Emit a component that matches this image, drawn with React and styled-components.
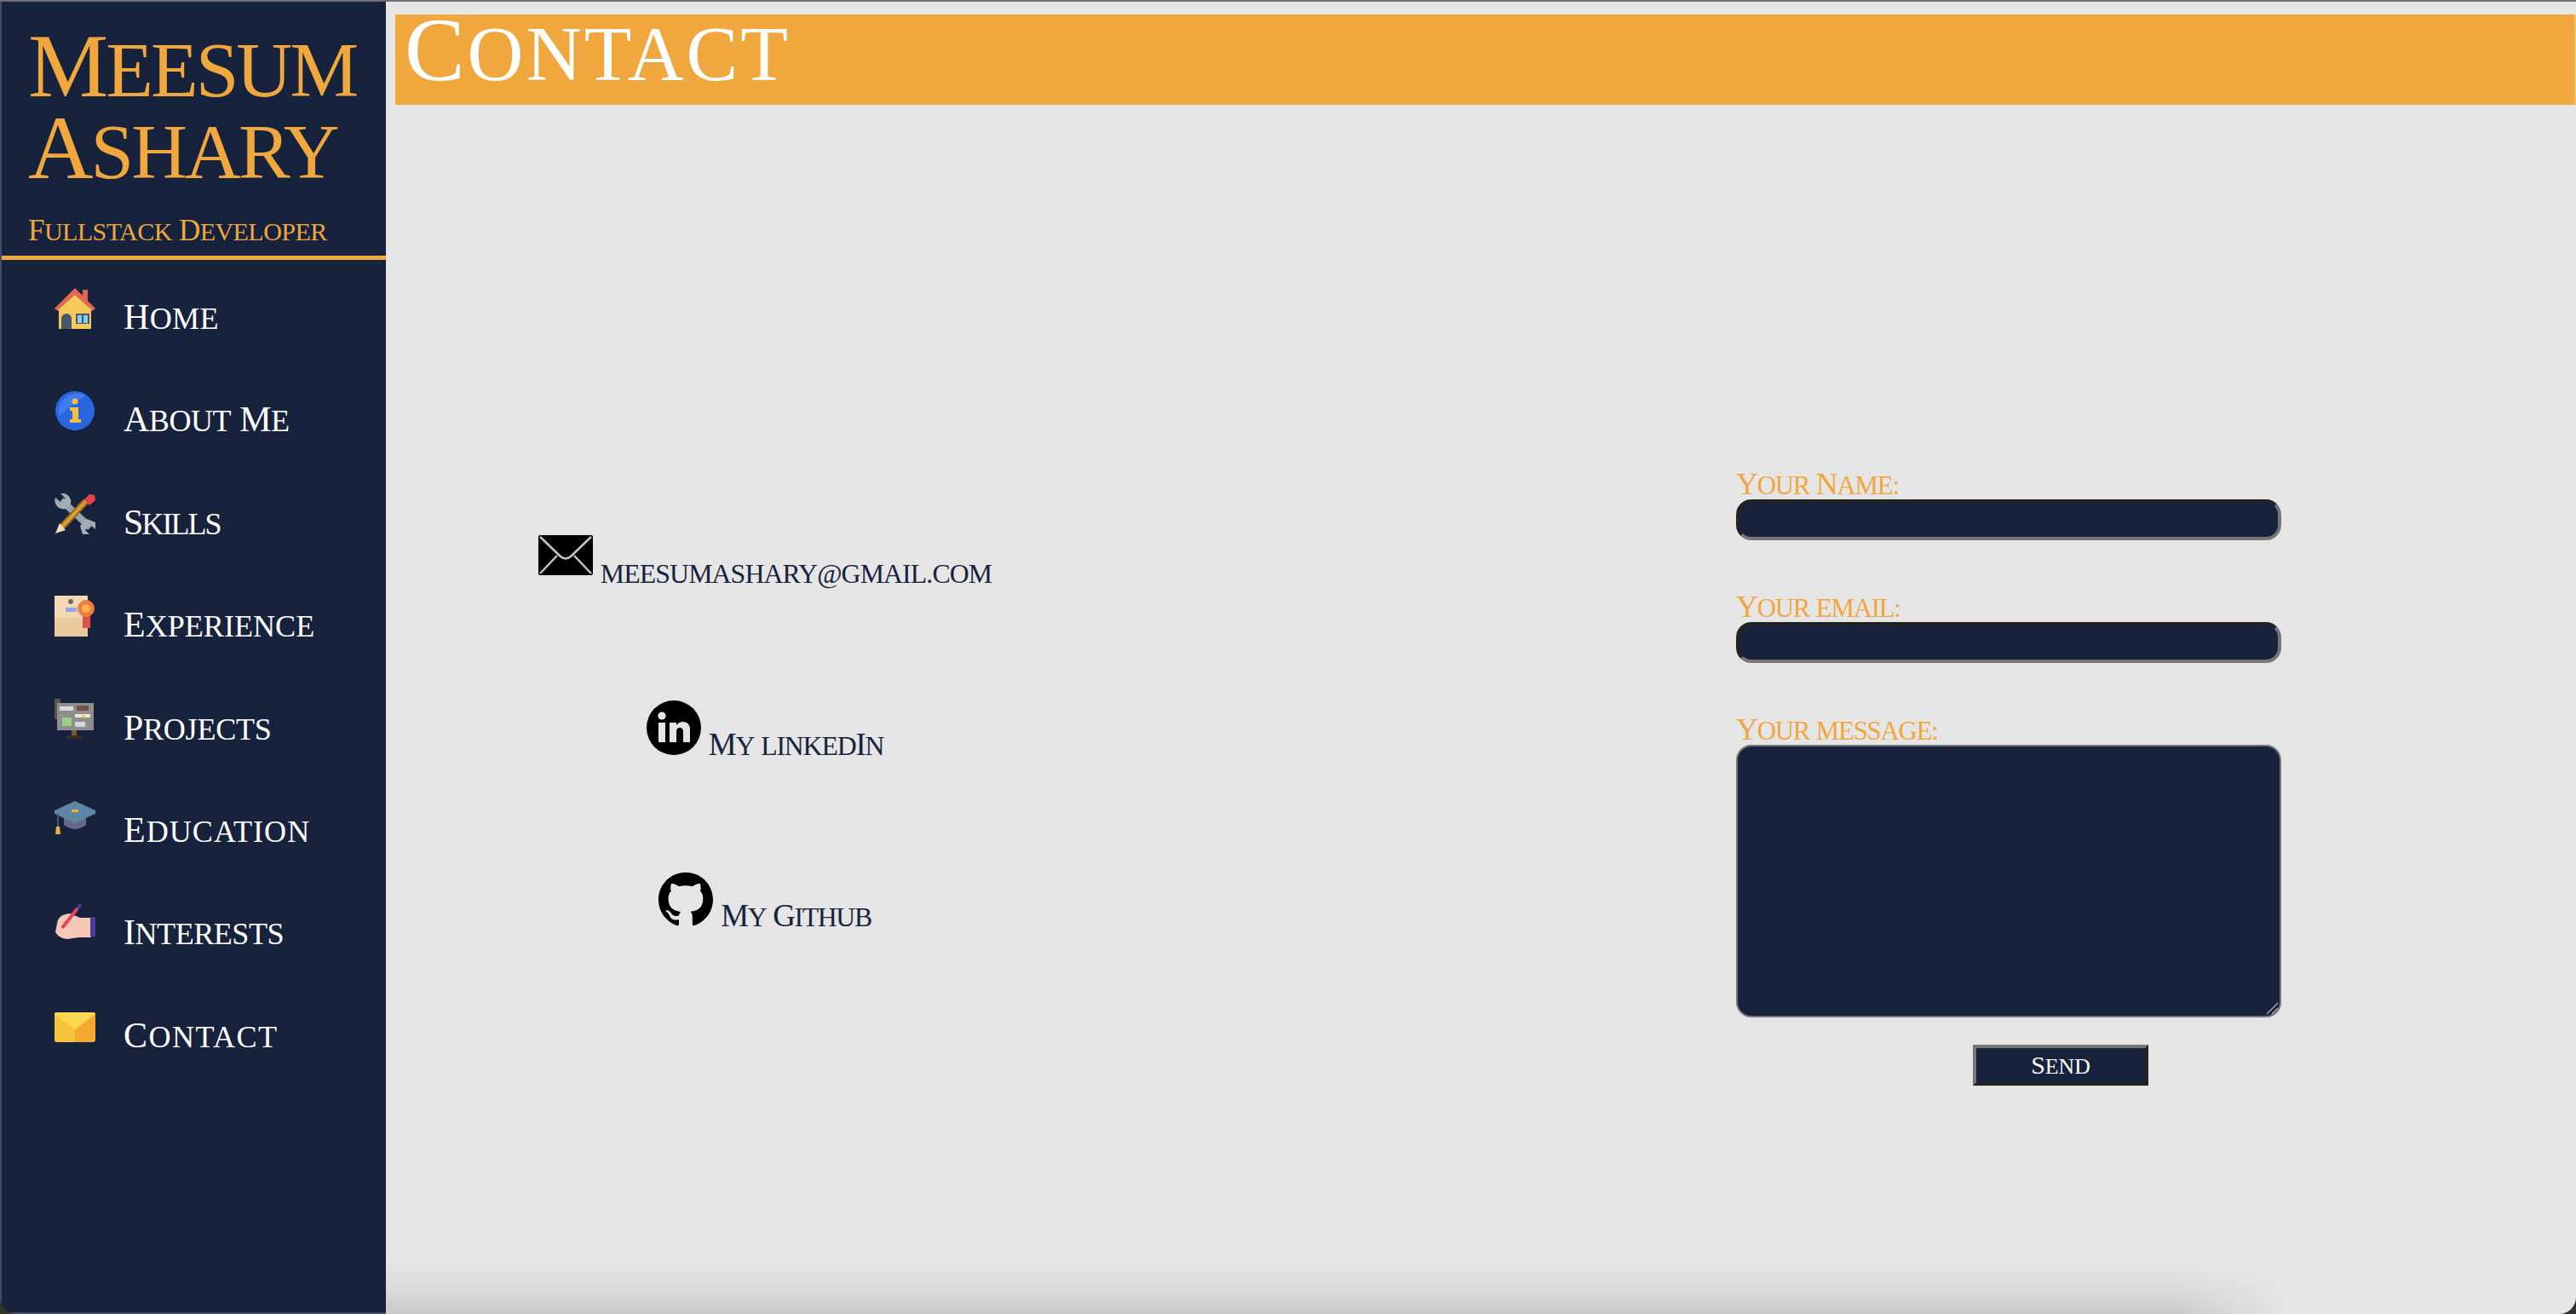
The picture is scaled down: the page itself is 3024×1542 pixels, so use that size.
import React from "react";
import styled, {createGlobalStyle} from "styled-components";
import {SiGithub} from "react-icons/si";

const navy = "#17223d";
const orange = "#f0a73d";
const serif = `"Liberation Serif", "Times New Roman", serif`;

const GlobalStyle = createGlobalStyle`
    html, body {
        margin: 0;
        padding: 0;
        height: 100%;
        overflow: hidden;
    }
    body {
        font-family: ${serif};
        background: #e5e5e5;
    }
`;

const Page = styled.div`
    position: relative;
    display: flex;
    box-sizing: border-box;
    height: 100vh;
    border-top: 2px solid #6f6f6f;
    overflow: hidden;
`;

const Sidebar = styled.aside`
    flex: 0 0 453px;
    box-sizing: border-box;
    background: ${navy};
    border-left: 2px solid #454c66;
    border-bottom: 2px solid #454c66;
`;

const Brand = styled.header`
    box-sizing: border-box;
    padding: 28px 0 9px 31px;
    border-bottom: 5px solid ${orange};
`;

const BrandName = styled.h1`
    margin: 0;
    font-size: 106px;
    line-height: 96px;
    font-weight: 400;
    letter-spacing: -3px;
    color: ${orange};
`;

const BrandLine = styled.span`
    display: block;
`;

const BrandRole = styled.p`
    margin: 29px 0 0;
    font-size: 35px;
    line-height: 40px;
    letter-spacing: -0.6px;
    color: ${orange};
`;

const Nav = styled.nav`
    display: flex;
    flex-direction: column;
    gap: 72.4px;
    padding: 33px 0 0 62px;
`;

const NavItem = styled.a`
    display: flex;
    align-items: baseline;
    gap: 33px;
    height: 48px;
    font-size: 42px;
    letter-spacing: ${(p) => p.$spacing || 0}px;
    color: #fff;
    text-decoration: none;

    svg {
        filter: blur(0.6px);
    }
`;

const Main = styled.main`
    flex: 1;
    min-width: 0;
    padding: 15px 0 0 11px;
`;

const TitleBar = styled.h2`
    box-sizing: border-box;
    height: 106px;
    margin: 0;
    padding-left: 11px;
    background: ${orange};
    border-right: 2px solid #f5bd6e;
    font-size: 106px;
    line-height: 84px;
    font-weight: 400;
    letter-spacing: 2.8px;
    color: #fff;
`;

const Content = styled.section`
    display: grid;
    grid-template-columns: 868px 640px;
    column-gap: 706px;
`;

const Links = styled.div`
    display: flex;
    flex-direction: column;
    align-items: center;
    gap: 137.5px;
    padding-top: 497px;
`;

const LinkRow = styled.a`
    display: flex;
    align-items: baseline;
    gap: 9px;
    height: 64px;
    font-size: 37px;
    letter-spacing: ${(p) => p.$spacing}px;
    color: ${navy};
    text-decoration: none;

    svg {
        filter: blur(0.4px);
    }
`;

const Form = styled.form`
    display: flex;
    flex-direction: column;
    padding-top: 427px;
`;

const Label = styled.label`
    display: block;
    margin-top: ${(p) => (p.$first ? "0" : "60px")};
    font-size: 36px;
    line-height: 36px;
    letter-spacing: -1.3px;
    color: ${orange};
`;

const TextInput = styled.input`
    display: block;
    box-sizing: border-box;
    width: 100%;
    height: 48px;
    background: ${navy};
    border-style: solid;
    border-width: 4px;
    border-color: #222 #767676 #767676 #222;
    border-radius: 18px;
    outline: none;
`;

const MessageBox = styled.div`
    position: relative;
    height: 320px;
`;

const MessageInput = styled.textarea`
    display: block;
    box-sizing: border-box;
    width: 100%;
    height: 100%;
    background: ${navy};
    border: 2px solid #767676;
    border-radius: 18px;
    outline: none;
    resize: none;
`;

const ResizeGrip = styled.svg`
    position: absolute;
    right: 3px;
    bottom: 3px;
    pointer-events: none;
`;

const SendButton = styled.button`
    box-sizing: border-box;
    width: 206px;
    height: 48px;
    margin: 32px 0 0 278px;
    padding: 0;
    background: ${navy};
    border-style: solid;
    border-width: 4px;
    border-color: #767676 #222 #222 #767676;
    font-family: ${serif};
    font-size: 30px;
    line-height: 36px;
    color: #fff;
`;

const DockShadow = styled.div`
    position: absolute;
    left: 453px;
    bottom: 0;
    width: 2230px;
    height: 60px;
    background: linear-gradient(
        to bottom,
        rgba(0, 0, 0, 0),
        rgba(0, 0, 0, 0.03) 40%,
        rgba(0, 0, 0, 0.08) 75%,
        rgba(0, 0, 0, 0.12)
    );
    mask-image: linear-gradient(to right, #000 calc(100% - 135px), transparent);
    pointer-events: none;
`;

// rounded bottom corners of the browser window, desktop showing behind them
const WindowCorners = styled.div`
    position: absolute;
    inset: 0;
    border-radius: 0 0 20px 20px;
    box-shadow: 0 0 0 30px #2e3526;
    pointer-events: none;
`;

const Low = styled.span`
    font-size: 0.86em;
    line-height: 0;
    text-transform: uppercase;
`;

// the reference font has real small caps, this one only has fake ones at 0.7em
const SmallCaps = ({text}) => (
    <span>
        {text.split(/([A-Z ]+)/).map((part, idx) => (idx % 2 ? part : part && <Low key={idx}>{part}</Low>))}
    </span>
);

const HomeIcon = () => (
    <svg width="48" height="48" viewBox="0 0 48 48">
        <rect x="33" y="2" width="6" height="14" fill="#d9694f" />
        <rect x="5" y="20" width="38" height="28" fill="#f7c95c" />
        <path d="M24 0 L48 24 L44 27 L24 8 L4 27 L0 24 Z" fill="#e2694f" />
        <path d="M24 8 L44 26 H4 Z" fill="#f7c95c" />
        <path d="M8 48 V36 a6 6 0 0 1 12 0 V48 Z" fill="#46586a" />
        <rect x="25" y="30" width="16" height="12" fill="#46586a" />
        <rect x="27" y="32" width="5" height="9" fill="#8ccbf0" />
        <rect x="34" y="32" width="5" height="9" fill="#8ccbf0" />
    </svg>
);

const InfoIcon = () => (
    <svg width="48" height="48" viewBox="0 0 48 48">
        <circle cx="24" cy="24" r="23" fill="#2a66e0" />
        <path d="M5 30 A22 22 0 0 1 36 6 Z" fill="#3f7df0" />
        <circle cx="24" cy="13" r="3.5" fill="#f2c23c" />
        <path d="M18 20 H28 V34 H31 V38 H18 V34 H21 V24 H18 Z" fill="#f2c23c" />
    </svg>
);

const ToolsIcon = () => (
    <svg width="48" height="48" viewBox="0 0 48 48">
        <path d="M8 8 L42 40" stroke="#98a2ab" strokeWidth="8" />
        <path d="M1 5 L8 11 L13 6 L7 0 A10 10 0 0 1 19 12 L13 18 A10 10 0 0 1 1 5 Z" fill="#a3adb6" />
        <path d="M48 42 L42 37 L36 43 L41 48 H33 L30 38 L38 30 L48 34 Z" fill="#a3adb6" />
        <path d="M8 40 L37 9" stroke="#8a6a2c" strokeWidth="8" />
        <path d="M8 40 L37 9" stroke="#e89a2c" strokeWidth="4" />
        <path d="M6 35 L13 43 L1 47 Z" fill="#f2dcb8" />
        <path d="M35 7 L41 1 L47 2 L48 8 L41 14 Z" fill="#e8424f" />
    </svg>
);

const CertificateIcon = () => (
    <svg width="48" height="48" viewBox="0 0 48 48">
        <rect x="0" y="0" width="39" height="48" fill="#f3d8b4" />
        <rect x="0" y="26" width="39" height="22" fill="#ecc99c" />
        <circle cx="19" cy="7" r="3" fill="#7a6a64" />
        <rect x="13" y="14" width="13" height="5" fill="#9aa5ee" />
        <rect x="33" y="22" width="9" height="16" fill="#e34f4f" />
        <circle cx="37" cy="15" r="10" fill="#ef7d44" />
        <circle cx="37" cy="15" r="5" fill="#f6b24e" />
    </svg>
);

const ProjectsIcon = () => (
    <svg width="48" height="48" viewBox="0 0 48 48">
        <rect x="0" y="0" width="7" height="24" fill="#5a5346" />
        <rect x="3" y="5" width="43" height="32" fill="#8e8e8e" />
        <rect x="6" y="9" width="16" height="5" fill="#d9d9d9" />
        <rect x="26" y="8" width="14" height="6" fill="#6f5349" />
        <rect x="9" y="22" width="11" height="10" fill="#9ccf83" />
        <rect x="24" y="18" width="18" height="4" fill="#e6e6e6" />
        <rect x="24" y="27" width="12" height="6" fill="#d5d5d5" />
        <circle cx="34" cy="21" r="2" fill="#e8c14a" />
        <rect x="20" y="37" width="6" height="6" fill="#7a5a30" />
        <rect x="14" y="43" width="19" height="4" fill="#3c2c20" />
    </svg>
);

const CapIcon = () => (
    <svg width="48" height="48" viewBox="0 0 48 48">
        <path d="M11 18 V28 Q24 38 37 28 V18 Z" fill="#64668a" />
        <path d="M24 0 L48 11 V15 L24 26 L0 15 V11 Z" fill="#5d86a4" />
        <rect x="20" y="10" width="8" height="3" fill="#e8b33c" />
        <rect x="3" y="15" width="2" height="20" fill="#46586a" />
        <path d="M2 30 H6 L7 39 H1 Z" fill="#e8b33c" />
    </svg>
);

const HandIcon = () => (
    <svg width="48" height="48" viewBox="0 0 48 48">
        <path d="M3 24 Q4 13 18 12 L30 17 H43 V40 H30 Q20 41 16 42 Q6 42 1 34 Z" fill="#f6c8b8" />
        <rect x="42" y="16" width="6" height="23" fill="#4a3a9c" />
        <path d="M9 29 L27 6" stroke="#e0465a" strokeWidth="4" />
        <path d="M27 6 L31 1" stroke="#4a3a9c" strokeWidth="4" />
    </svg>
);

const EnvelopeIcon = () => (
    <svg width="48" height="48" viewBox="0 0 48 48">
        <rect x="0" y="7" width="48" height="35" rx="3" fill="#f4a832" />
        <path d="M0 10 Q0 7 3 7 H24 V42 H3 Q0 42 0 39 Z" fill="#f6c239" />
        <path d="M0 9 Q0 7 3 7 H45 Q48 7 48 9 L24 27 Z" fill="#fbd850" />
    </svg>
);

const MailGlyph = () => (
    <svg width="64" height="64" viewBox="0 0 64 64">
        <rect x="0" y="8" width="64" height="47" rx="2" fill="#000" />
        <path d="M2 10 L26 33 Q32 38 38 33 L62 10 M2 53 L22 32 M62 53 L42 32" fill="none" stroke="#c4c4c4" strokeWidth="2.5" />
    </svg>
);

const LinkedinGlyph = () => (
    <svg width="64" height="64" viewBox="0 0 64 64">
        <circle cx="32" cy="32" r="32" fill="#000" />
        <rect x="14" y="26" width="8" height="23" fill="#e5e5e5" />
        <circle cx="18" cy="18" r="4.6" fill="#e5e5e5" />
        <path d="M27 26 H35 V29 Q38 25 43 25 Q51 25 51 35 V49 H43 V37 Q43 32 39 32 Q35 32 35 37 V49 H27 Z" fill="#e5e5e5" />
    </svg>
);

const navItems = [
    {label: "Home", Icon: HomeIcon, spacing: 0.3},
    {label: "About Me", Icon: InfoIcon, spacing: -0.5},
    {label: "Skills", Icon: ToolsIcon, spacing: -2},
    {label: "Experience", Icon: CertificateIcon, spacing: 0},
    {label: "Projects", Icon: ProjectsIcon, spacing: -0.3},
    {label: "Education", Icon: CapIcon, spacing: 1},
    {label: "Interests", Icon: HandIcon, spacing: -0.5},
    {label: "Contact", Icon: EnvelopeIcon, spacing: 1.4},
];

export default function App() {
    return (
        <>
            <GlobalStyle />
            <Page>
                <Sidebar>
                    <Brand>
                        <BrandName>
                            <BrandLine><SmallCaps text="Meesum" /></BrandLine>
                            <BrandLine><SmallCaps text="Ashary" /></BrandLine>
                        </BrandName>
                        <BrandRole><SmallCaps text="Fullstack Developer" /></BrandRole>
                    </Brand>
                    <Nav>
                        {navItems.map(({label, Icon, spacing}) => (
                            <NavItem href="#" key={label} $spacing={spacing}>
                                <Icon />
                                <SmallCaps text={label} />
                            </NavItem>
                        ))}
                    </Nav>
                </Sidebar>
                <Main>
                    <TitleBar><SmallCaps text="Contact" /></TitleBar>
                    <Content>
                        <Links>
                            <LinkRow href="#" $spacing={-0.9}>
                                <MailGlyph />
                                <SmallCaps text="meesumashary@gmail.com" />
                            </LinkRow>
                            <LinkRow href="#" $spacing={-1.2}>
                                <LinkedinGlyph />
                                <SmallCaps text="My linkedIn" />
                            </LinkRow>
                            <LinkRow href="#" $spacing={-1.4}>
                                <SiGithub size={64} color="#000" />
                                <SmallCaps text="My Github" />
                            </LinkRow>
                        </Links>
                        <Form onSubmit={(e) => e.preventDefault()}>
                            <Label $first htmlFor="name"><SmallCaps text="Your Name:" /></Label>
                            <TextInput id="name" type="text" />
                            <Label htmlFor="email"><SmallCaps text="Your email:" /></Label>
                            <TextInput id="email" type="email" />
                            <Label htmlFor="message"><SmallCaps text="Your message:" /></Label>
                            <MessageBox>
                                <MessageInput id="message" />
                                <ResizeGrip width="16" height="16" viewBox="0 0 16 16">
                                    <path d="M2 15 L15 2 M8 15 L15 8" stroke="#a4a4a4" strokeWidth="1.5" />
                                </ResizeGrip>
                            </MessageBox>
                            <SendButton type="submit"><SmallCaps text="Send" /></SendButton>
                        </Form>
                    </Content>
                </Main>
                <DockShadow />
                <WindowCorners />
            </Page>
        </>
    );
}
